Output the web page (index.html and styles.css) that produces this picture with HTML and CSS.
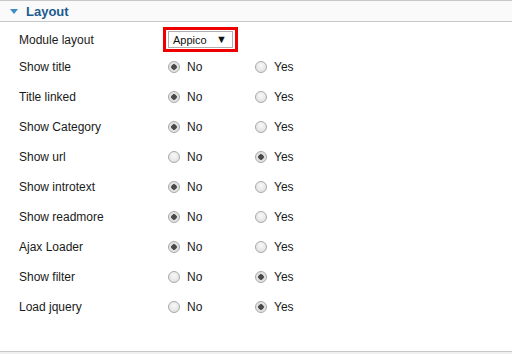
FILE: index.html
```html
<!DOCTYPE html>
<html lang="en">
<head>
    <meta charset="UTF-8">
    <title>Module options</title>
    <link rel="stylesheet" href="styles.css">
</head>
<body>
    <div class="panel">
        <h3 class="panel-title"><span class="toggle"></span>Layout</h3>
        <div class="panel-body">
            <div class="row row-select">
                <label class="label">Module layout</label>
                <div class="highlight">
                    <div class="select"><span>Appico</span><span class="arrow">&#9660;</span></div>
                </div>
            </div>
            <div class="row">
                <label class="label">Show title</label>
                <label class="option"><input type="radio" name="showtitle" checked>No</label>
                <label class="option"><input type="radio" name="showtitle">Yes</label>
            </div>
            <div class="row">
                <label class="label">Title linked</label>
                <label class="option"><input type="radio" name="titlelinked" checked>No</label>
                <label class="option"><input type="radio" name="titlelinked">Yes</label>
            </div>
            <div class="row">
                <label class="label">Show Category</label>
                <label class="option"><input type="radio" name="showcat" checked>No</label>
                <label class="option"><input type="radio" name="showcat">Yes</label>
            </div>
            <div class="row">
                <label class="label">Show url</label>
                <label class="option"><input type="radio" name="showurl">No</label>
                <label class="option"><input type="radio" name="showurl" checked>Yes</label>
            </div>
            <div class="row">
                <label class="label">Show introtext</label>
                <label class="option"><input type="radio" name="introtext" checked>No</label>
                <label class="option"><input type="radio" name="introtext">Yes</label>
            </div>
            <div class="row">
                <label class="label">Show readmore</label>
                <label class="option"><input type="radio" name="readmore" checked>No</label>
                <label class="option"><input type="radio" name="readmore">Yes</label>
            </div>
            <div class="row">
                <label class="label">Ajax Loader</label>
                <label class="option"><input type="radio" name="ajax" checked>No</label>
                <label class="option"><input type="radio" name="ajax">Yes</label>
            </div>
            <div class="row">
                <label class="label">Show filter</label>
                <label class="option"><input type="radio" name="filter">No</label>
                <label class="option"><input type="radio" name="filter" checked>Yes</label>
            </div>
            <div class="row">
                <label class="label">Load jquery</label>
                <label class="option"><input type="radio" name="jquery">No</label>
                <label class="option"><input type="radio" name="jquery" checked>Yes</label>
            </div>
        </div>
    </div>
</body>
</html>
```

FILE: styles.css
```css
body {
    margin: 0;
    font-family: 'Liberation Sans', Arial, sans-serif;
    font-size: 12px;
    color: #1a1a1a;
    background: #f0f0f0;
}

.panel {
    background: #fff;
    border-top: 1px solid #c8c8c8;
    border-bottom: 1px solid #c8c8c8;
}

.panel-title {
    margin: 0;
    height: 20px;
    display: flex;
    align-items: center;
    padding-left: 10px;
    background: #fafafa;
    border-bottom: 1px solid #c8c8c8;
    font-size: 13px;
    font-weight: bold;
    color: #1a5c8e;
}

.toggle {
    width: 0;
    height: 0;
    border-left: 4px solid transparent;
    border-right: 4px solid transparent;
    border-top: 5px solid #3b8ec5;
    margin-right: 8px;
    margin-top: 1px;
}

.panel-body {
    padding: 5px 0 29px 19px;
}

.row {
    display: flex;
    align-items: center;
    height: 30px;
}

.row-select {
    height: 25px;
}

.label {
    width: 144px;
}

.highlight {
    border: 3px solid #ee0000;
    padding: 1px 2px;
}

.select {
    box-sizing: border-box;
    width: 65px;
    height: 17px;
    border: 1px solid #b0b0b0;
    display: flex;
    align-items: center;
    justify-content: space-between;
    padding: 0 5px 0 4px;
    font-size: 11px;
    color: #111;
}

.arrow {
    font-size: 11px;
    line-height: 1;
}

.option {
    width: 87px;
    display: flex;
    align-items: center;
}

.option input {
    appearance: none;
    width: 12px;
    height: 12px;
    margin: 0 7px 0 5px;
    border-radius: 50%;
    border: 1px solid #a8a8a8;
    background: radial-gradient(circle at 50% 35%, #f8f8f8, #dcdcdc);
}

.option input:checked {
    background: radial-gradient(circle, #4a4a4a 0, #4a4a4a 2.5px, #ddd 3px, #eee 100%);
}
```
